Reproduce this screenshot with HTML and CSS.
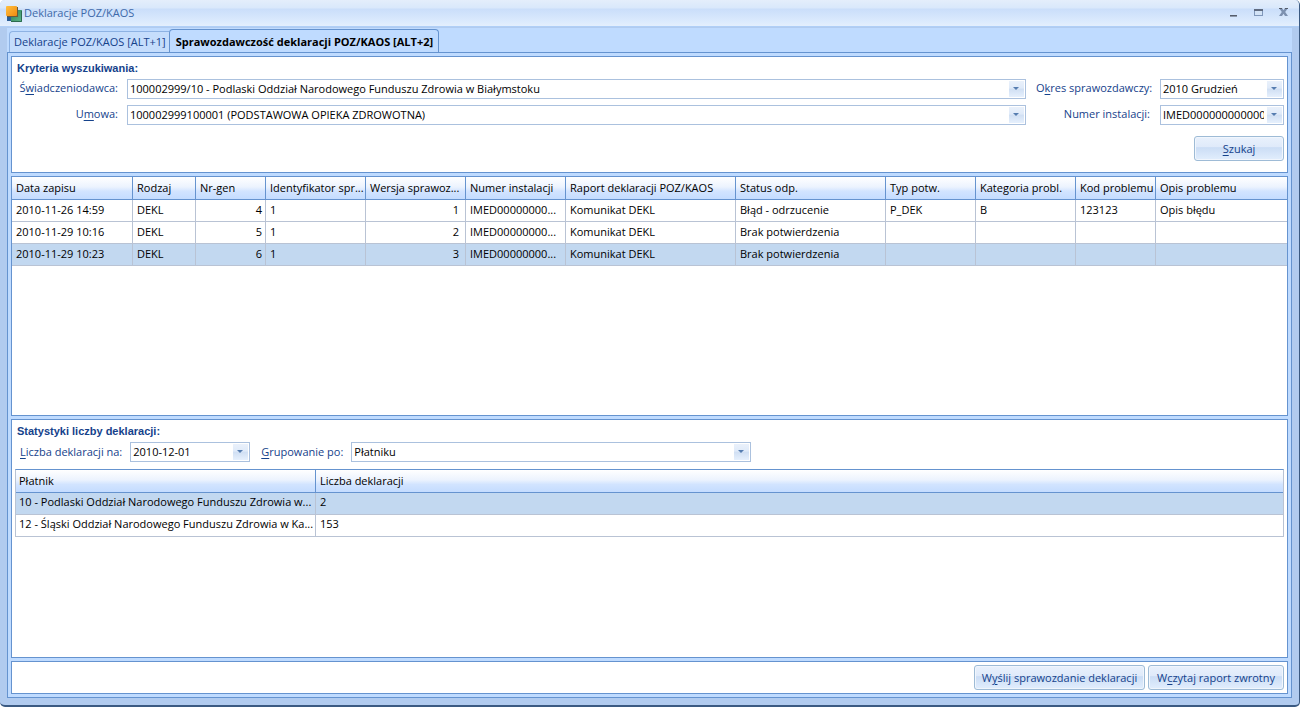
FILE: index.html
```
<!DOCTYPE html>
<html lang="pl">
<head>
<meta charset="utf-8">
<title>Deklaracje POZ/KAOS</title>
<link rel="stylesheet" href="styles.css">
</head>
<body>
<div class="window">
  <header class="titlebar">
    <svg class="app-icon" width="16" height="16" viewBox="0 0 16 16" aria-hidden="true">
      <defs>
        <linearGradient id="or" x1="0" y1="0" x2="1" y2="1"><stop offset="0" stop-color="#ffc040"/><stop offset="1" stop-color="#f08a10"/></linearGradient>
        <linearGradient id="gr" x1="0" y1="0" x2="1" y2="1"><stop offset="0" stop-color="#2f7d55"/><stop offset="1" stop-color="#5fba8c"/></linearGradient>
      </defs>
      <rect x="1" y="10" width="6" height="5" fill="#2a5d96"/>
      <rect x="5" y="4" width="11" height="12" fill="url(#gr)"/>
      <path d="M5 15.500H15.500V5" fill="none" stroke="#2d6b50"/>
      <rect x="1" y="1" width="11" height="10" fill="#6b5a3a"/>
      <rect x="0" y="0" width="11" height="10" rx="1" fill="url(#or)"/>
    </svg>
    <h1 class="title">Deklaracje POZ/KAOS</h1>
    <div class="window-buttons">
      <button class="win-btn" type="button" aria-label="Minimalizuj"><svg width="12" height="12" viewBox="0 0 12 12"><rect x="3" y="8" width="7" height="1" fill="#555d6b"/><rect x="3" y="9" width="7" height="1" fill="#8e99ab"/></svg></button>
      <button class="win-btn" type="button" aria-label="Maksymalizuj"><svg width="12" height="12" viewBox="0 0 12 12"><rect x="2.500" y="2.500" width="8" height="6" fill="#d3e3f6" stroke="#7f97ba"/><rect x="2" y="2" width="9" height="2" fill="#5f6b80"/></svg></button>
      <button class="win-btn" type="button" aria-label="Zamknij"><svg width="12" height="12" viewBox="0 0 12 12"><path d="M2 1H5L6.500 3.200L8 1H11L8.200 5L11 9H8L6.500 6.800L5 9H2L4.800 5Z" fill="#7d91b0"/><path d="M2 1.500H5M8 1.500H11" stroke="#555d6b"/></svg></button>
    </div>
  </header>
  <main class="frame">
    <div class="tabs" role="tablist">
      <button class="tab" type="button" role="tab" aria-selected="false">Deklaracje POZ/KAOS [ALT+1]</button>
      <button class="tab tab-active" type="button" role="tab" aria-selected="true">Sprawozdawczość deklaracji POZ/KAOS [ALT+2]</button>
    </div>
    <div class="page">
      <section class="panel criteria">
        <h2 class="heading">Kryteria wyszukiwania:</h2>
        <div class="criteria-grid">
          <label class="label" for="provider">Ś<u>w</u>iadczeniodawca:</label>
          <div class="combo"><select id="provider"><option>100002999/10 - Podlaski Oddział Narodowego Funduszu Zdrowia w Białymstoku</option></select></div>
          <label class="label" for="period">O<u>k</u>res sprawozdawczy:</label>
          <div class="combo"><select id="period"><option>2010 Grudzień</option></select></div>
          <label class="label" for="contract">U<u>m</u>owa:</label>
          <div class="combo"><select id="contract"><option>100002999100001 (PODSTAWOWA OPIEKA ZDROWOTNA)</option></select></div>
          <label class="label" for="install">Numer instalacji:</label>
          <div class="combo"><select id="install"><option>IMED0000000000000</option></select></div>
        </div>
        <div class="actions"><button class="btn btn-search" type="button"><u>S</u>zukaj</button></div>
      </section>
      <section class="panel reports">
        <table class="grid">
          <colgroup><col class="w121"><col class="w63"><col class="w70"><col class="w100"><col class="w100"><col class="w100"><col class="w170"><col class="w150"><col class="w90"><col class="w100"><col class="w80"><col></colgroup>
          <thead><tr><th>Data zapisu</th><th>Rodzaj</th><th>Nr-gen</th><th>Identyfikator spr...</th><th>Wersja sprawoz...</th><th>Numer instalacji</th><th>Raport deklaracji POZ/KAOS</th><th>Status odp.</th><th>Typ potw.</th><th>Kategoria probl.</th><th>Kod problemu</th><th>Opis problemu</th></tr></thead>
          <tbody>
            <tr><td>2010-11-26 14:59</td><td>DEKL</td><td class="num">4</td><td>1</td><td class="num wide">1</td><td>IMED00000000...</td><td>Komunikat DEKL</td><td>Błąd - odrzucenie</td><td>P_DEK</td><td>B</td><td>123123</td><td>Opis błędu</td></tr>
            <tr><td>2010-11-29 10:16</td><td>DEKL</td><td class="num">5</td><td>1</td><td class="num wide">2</td><td>IMED00000000...</td><td>Komunikat DEKL</td><td>Brak potwierdzenia</td><td></td><td></td><td></td><td></td></tr>
            <tr class="selected"><td>2010-11-29 10:23</td><td>DEKL</td><td class="num">6</td><td>1</td><td class="num wide">3</td><td>IMED00000000...</td><td>Komunikat DEKL</td><td>Brak potwierdzenia</td><td></td><td></td><td></td><td></td></tr>
          </tbody>
        </table>
      </section>
      <section class="panel stats">
        <h2 class="heading">Statystyki liczby deklaracji:</h2>
        <div class="filters">
          <label class="label" for="day"><u>L</u>iczba deklaracji na:</label>
          <div class="combo combo-date"><select id="day"><option>2010-12-01</option></select></div>
          <label class="label" for="group"><u>G</u>rupowanie po:</label>
          <div class="combo combo-group"><select id="group"><option>Płatniku</option></select></div>
        </div>
        <div class="boxed">
          <table class="grid">
            <colgroup><col class="w300"><col></colgroup>
            <thead><tr><th>Płatnik</th><th>Liczba deklaracji</th></tr></thead>
            <tbody>
              <tr class="selected"><td>10 - Podlaski Oddział Narodowego Funduszu Zdrowia w...</td><td>2</td></tr>
              <tr><td>12 - Śląski Oddział Narodowego Funduszu Zdrowia w Ka...</td><td>153</td></tr>
            </tbody>
          </table>
        </div>
      </section>
      <footer class="panel footer">
        <button class="btn btn-send" type="button">W<u>y</u>ślij sprawozdanie deklaracji</button>
        <button class="btn btn-load" type="button">W<u>c</u>zytaj raport zwrotny</button>
      </footer>
    </div>
  </main>
</div>
</body>
</html>
```
FILE: styles.css
```
* { box-sizing: border-box; }

body {
  margin: 0;
  background: #fff;
  font: 11px/16px "Open Sans", "Noto Sans", sans-serif;
  color: #000;
}

button, select { font: inherit; margin: 0; }
u { text-underline-offset: 2px; }

.window {
  display: flex;
  flex-direction: column;
  height: 100vh;
  border-right: 1px solid #3b5a82;
  border-bottom: 2px solid #3b5a82;
  border-radius: 5px;
  background: #b1cbef;
  overflow: hidden;
}

.titlebar {
  display: flex;
  align-items: center;
  height: 27px;
  padding: 0 10px 0 6px;
  border-bottom: 1px solid #b0cff7;
  background: linear-gradient(#e4eefb 0, #d9e8fb 8px, #cadefa 9px, #dbeafd 21px, #e4effd 100%);
}
.app-icon { margin-top: 1px; }
.title {
  flex: 1;
  margin: 0 0 0 2px;
  font-size: 11px;
  font-weight: 400;
  color: #3e6aaa;
}
.window-buttons { display: flex; gap: 13px; }
.win-btn {
  display: flex;
  width: 12px;
  height: 12px;
  padding: 0;
  border: 0;
  background: none;
}

.frame {
  flex: 1;
  display: flex;
  flex-direction: column;
  min-height: 0;
  margin: 1px 7px 7px;
  background: #bfdbff;
}

.tabs {
  display: flex;
  align-items: flex-end;
  height: 24px;
  padding: 0 2px;
}
.tab {
  height: 21px;
  padding: 0 3px 0 4px;
  border: 1px solid #8db2e3;
  border-right: 0;
  border-bottom: 0;
  border-radius: 4px 0 0 0;
  background: #c5ddfc;
  color: #15428b;
  white-space: nowrap;
}
.tab-active {
  height: 24px;
  margin-bottom: -1px;
  padding: 0 5px 0 6px;
  border: 1px solid #6593cf;
  border-bottom: 0;
  border-radius: 4px 4px 0 0;
  background: #bfdbff;
  font-weight: 700;
  color: #000;
}

.page {
  flex: 1;
  display: flex;
  flex-direction: column;
  gap: 3px;
  min-height: 0;
  padding: 3px;
  border: 1px solid #6593cf;
}

.panel { border: 1px solid #6593cf; background: #fff; }

.heading {
  margin: 0;
  padding: 0 2px;
  font: bold 11px/16px "Liberation Sans", Arial, sans-serif;
  color: #15428b;
}
.label { color: #15428b; text-align: right; white-space: nowrap; }

.criteria { padding: 3px 3px 11px; }
.criteria-grid {
  display: grid;
  grid-template-columns: 103px minmax(0, 1fr) 114px 124px;
  gap: 6px 10px;
  align-items: center;
  margin-top: 3px;
}
.criteria-grid .label { padding-bottom: 2px; }
.criteria-grid .combo:nth-child(4n + 2) { margin-left: -1px; }
.actions { display: flex; justify-content: flex-end; margin-top: 11px; }

.combo { position: relative; height: 20px; }
.combo select {
  appearance: none;
  display: block;
  width: 100%;
  height: 20px;
  padding: 0 19px 0 2px;
  border: 1px solid #abc1de;
  border-radius: 0;
  background: #fff;
  color: #000;
}
.combo::before {
  content: "";
  position: absolute;
  top: 2px;
  right: 2px;
  width: 15px;
  height: 16px;
  background: linear-gradient(#eaf1fb, #dfeaf9 45%, #d0dff3 50%, #e6f0fd);
  pointer-events: none;
}
.combo::after {
  content: "";
  position: absolute;
  top: 8px;
  right: 7px;
  border: 3px solid transparent;
  border-top-color: #567db0;
  border-bottom: 0;
  pointer-events: none;
}
.combo-date { width: 120px; margin-right: 3px; }
.combo-date::before { right: 2px; }
.combo-group { width: 400px; }

.btn {
  height: 25px;
  padding: 0;
  border: 1px solid #9ebbd6;
  border-radius: 3px;
  background: linear-gradient(#e9f1fc, #dfeafa 44%, #cbddf5 46%, #e2eefd);
  box-shadow: inset 0 0 0 1px #f1f6fd;
  color: #15428b;
}
.btn-search { width: 90px; }
.btn-send { width: 171px; }
.btn-load { width: 136px; }

.reports, .stats { flex: 1 1 8px; min-height: 0; overflow: hidden; }

.grid {
  width: 100%;
  table-layout: fixed;
  border-collapse: separate;
  border-spacing: 0;
}
.grid th, .grid td {
  height: 22px;
  padding: 0 0 2px 4px;
  text-align: left;
  white-space: nowrap;
  font-weight: 400;
  border-right: 1px solid #b9c3d4;
  border-bottom: 1px solid #b9c3d4;
}
.grid th {
  height: 23px;
  padding-bottom: 0;
  border-color: #6593cf;
  background: linear-gradient(#fff, #ecf3fe 45%, #d2e4ff 65%, #c4dcff);
}
.grid th:last-child, .grid td:last-child { border-right: 0; }
.grid .num { padding-right: 3px; text-align: right; }
.grid .wide { padding-right: 6px; }
.selected { background: #c2d8f0; }
.w63 { width: 63px; }
.w70 { width: 70px; }
.w80 { width: 80px; }
.w90 { width: 90px; }
.w100 { width: 100px; }
.w121 { width: 121px; }
.w150 { width: 150px; }
.w170 { width: 170px; }
.w300 { width: 300px; }

.stats { padding: 3px; }
.filters {
  display: flex;
  align-items: center;
  gap: 8px;
  margin: 3px 0 7px;
  padding-left: 5px;
}
.boxed {
  border: 1px solid #b9c3d4;
  border-top-color: #6593cf;
  border-bottom: 0;
}
.boxed .grid th:first-child, .boxed .grid td:first-child { padding-left: 3px; }

.footer {
  display: flex;
  justify-content: flex-end;
  gap: 3px;
  padding: 3px;
}
```
